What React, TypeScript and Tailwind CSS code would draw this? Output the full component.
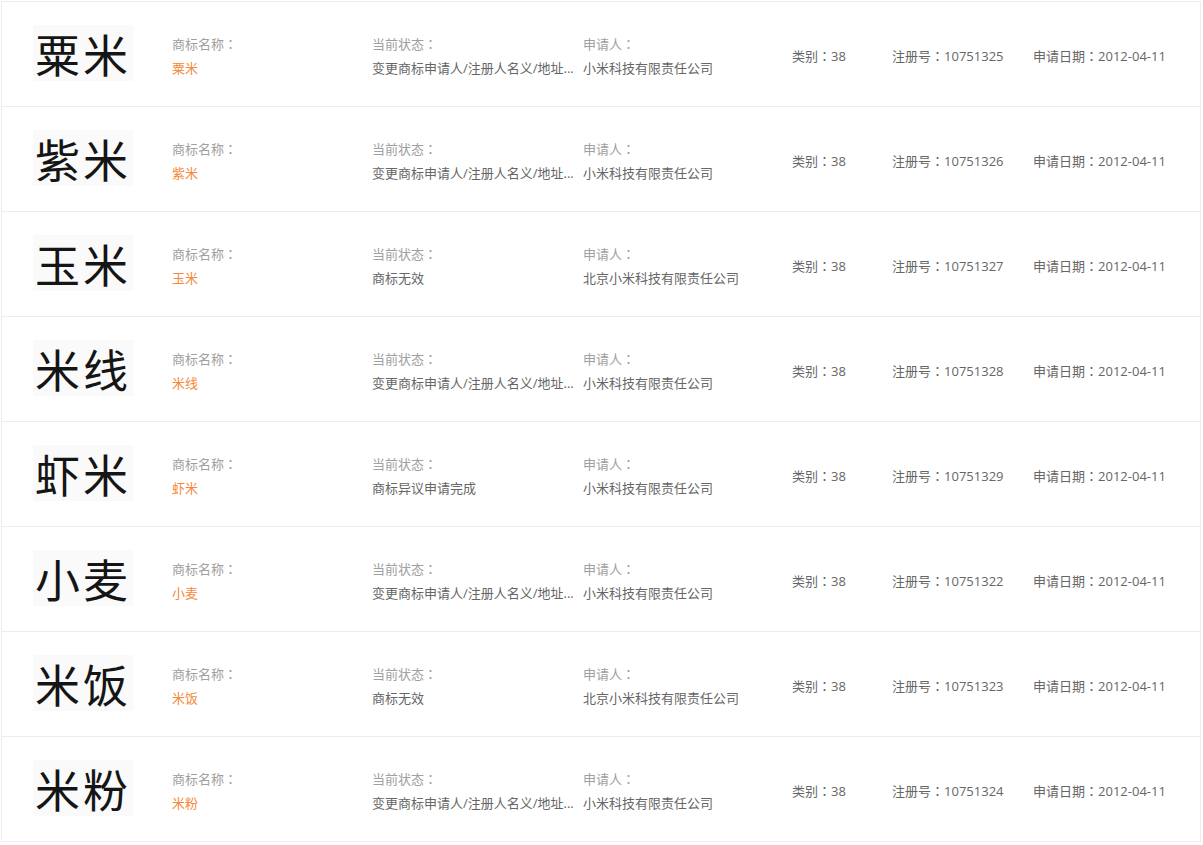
const rows = [
  { name: "粟米", status: "变更商标申请人/注册人名义/地址变更", owner: "小米科技有限责任公司", reg: "10751325" },
  { name: "紫米", status: "变更商标申请人/注册人名义/地址变更", owner: "小米科技有限责任公司", reg: "10751326" },
  { name: "玉米", status: "商标无效", owner: "北京小米科技有限责任公司", reg: "10751327" },
  { name: "米线", status: "变更商标申请人/注册人名义/地址变更", owner: "小米科技有限责任公司", reg: "10751328" },
  { name: "虾米", status: "商标异议申请完成", owner: "小米科技有限责任公司", reg: "10751329" },
  { name: "小麦", status: "变更商标申请人/注册人名义/地址变更", owner: "小米科技有限责任公司", reg: "10751322" },
  { name: "米饭", status: "商标无效", owner: "北京小米科技有限责任公司", reg: "10751323" },
  { name: "米粉", status: "变更商标申请人/注册人名义/地址变更", owner: "小米科技有限责任公司", reg: "10751324" },
]

// full-width colon, centered in its cell like the original font draws it
const Colon = () => <span style={{ fontFamily: '"Noto Sans CJK JP", sans-serif' }}>：</span>

const Field = ({ label, value, className }: { label: string; value: string; className?: string }) => (
  <div className="flex flex-col gap-[6px]">
    <span className="text-[#a0a0a0]">
      {label}
      <Colon />
    </span>
    <span className={className ?? "text-[#666]"}>{value}</span>
  </div>
)

export default function App() {
  return (
    <div
      className="min-h-screen bg-white pt-px pl-px text-[13px] leading-[18px]"
      style={{ fontFamily: '"Open Sans", "Noto Sans CJK SC", sans-serif' }}
    >
      <ul className="w-[1200px] border border-b-0 border-[#ededed]">
        {rows.map((r) => (
          <li key={r.reg} className="flex h-[105px] items-center border-b border-[#ededed] pt-1 pl-[31px]">
            <div
              className="mb-[6px] flex h-[56px] w-[100px] items-center justify-center bg-[#fafafa] text-[45px] leading-none tracking-[3px] text-[#151515]"
              style={{ fontFamily: '"Noto Sans CJK SC", sans-serif' }}
            >
              {r.name}
            </div>
            <div className="ml-[39px] w-[200px]">
              <Field label="商标名称" value={r.name} className="text-[#f5883a]" />
            </div>
            <div className="w-[211px]">
              <Field label="当前状态" value={r.status.length > 14 ? "变更商标申请人/注册人名义/地址..." : r.status} />
            </div>
            <div className="w-[209px]">
              <Field label="申请人" value={r.owner} />
            </div>
            <div className="w-[100px] text-[#666]">
              类别<Colon />38
            </div>
            <div className="w-[141px] text-[#666]">
              注册号<Colon />
              {r.reg}
            </div>
            <div className="text-[#666]">
              申请日期<Colon />
              2012-04-11
            </div>
          </li>
        ))}
      </ul>
    </div>
  )
}
